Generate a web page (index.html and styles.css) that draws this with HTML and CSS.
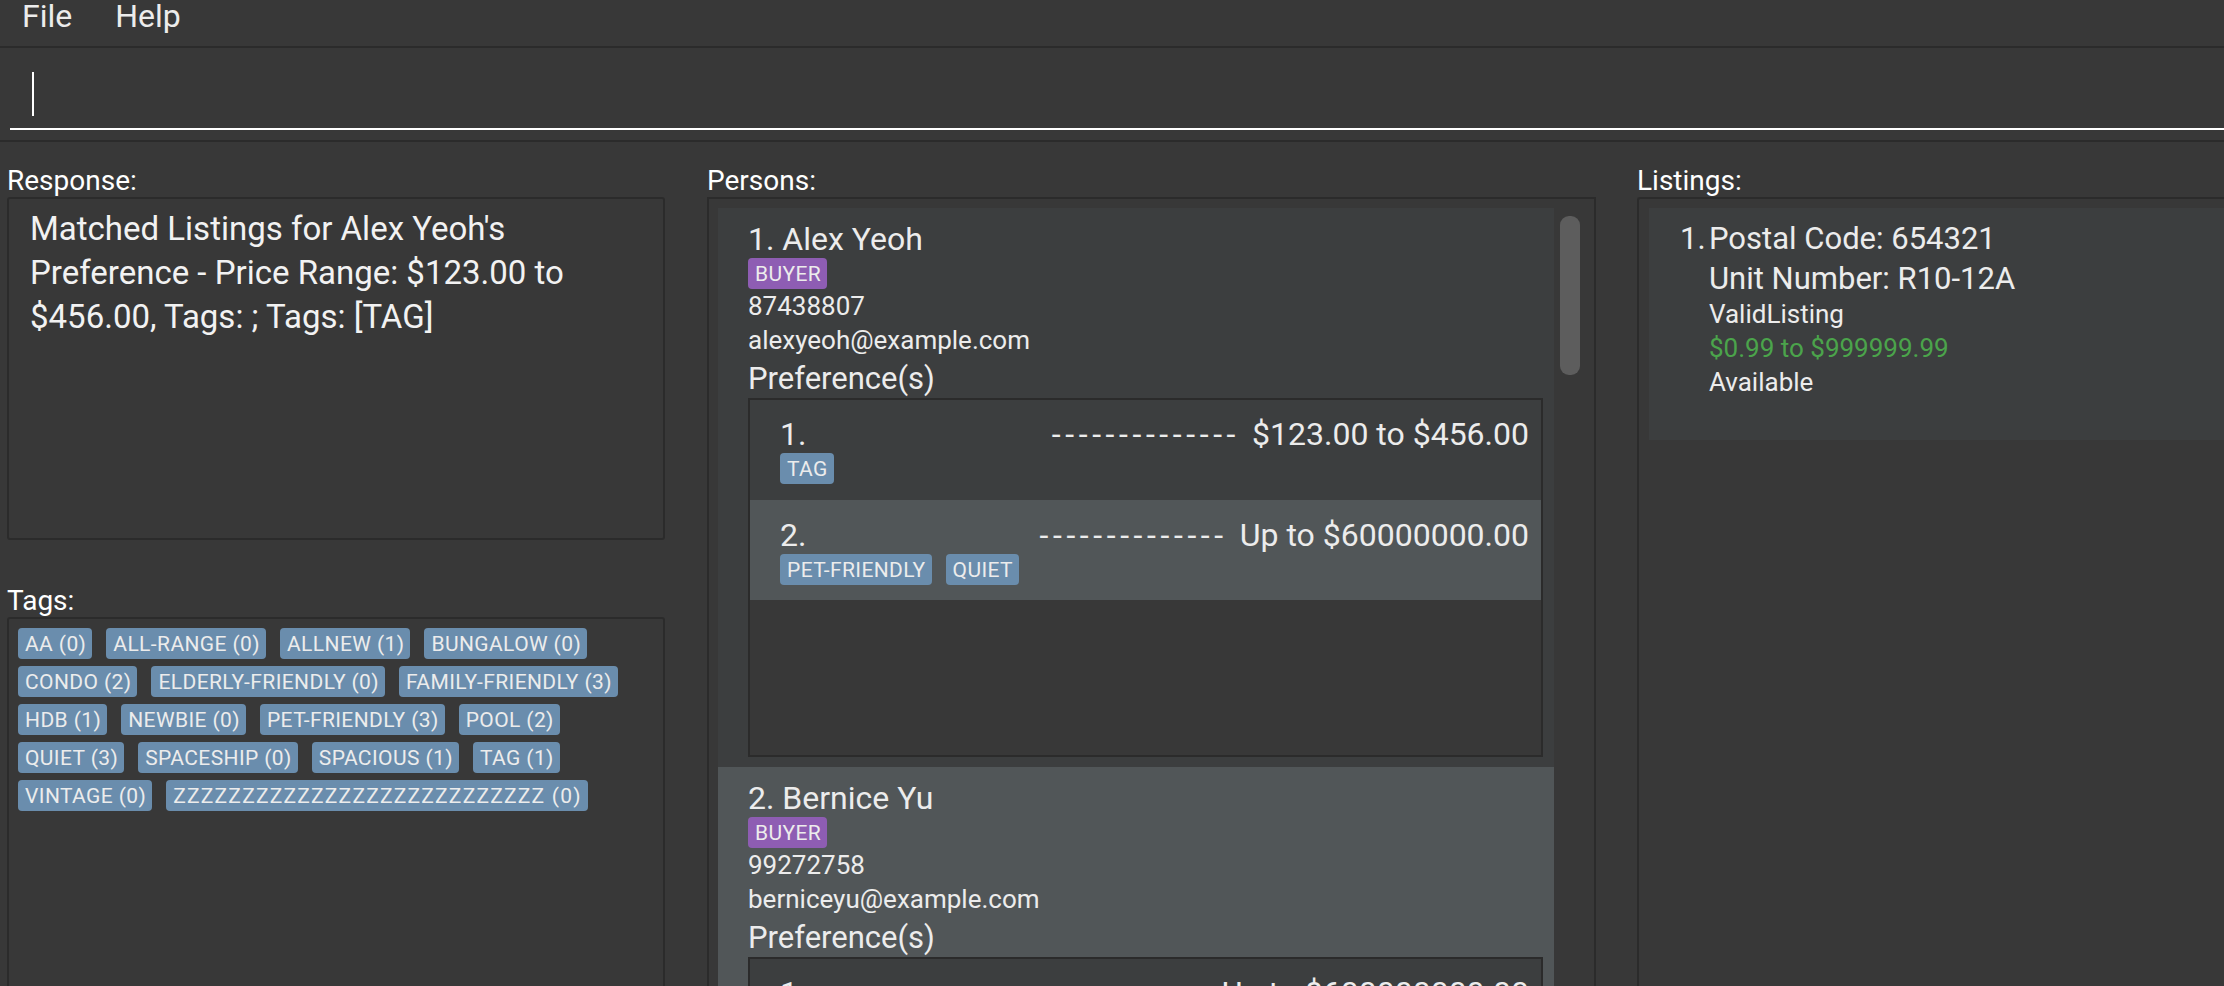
FILE: index.html
```html
<!DOCTYPE html>
<html>
<head>
<meta charset="utf-8">
<link rel="stylesheet" href="styles.css">
</head>
<body>
<div class="menubar">
  <span class="menu">File</span>
  <span class="menu">Help</span>
</div>
<div class="command">
  <div class="cmd-field"><span class="caret"></span></div>
</div>
<div class="main">
  <div class="col col-left">
    <div class="label">Response:</div>
    <div class="box response">Matched Listings for Alex Yeoh's Preference - Price Range: $123.00 to $456.00, Tags: ; Tags: [TAG]</div>
    <div class="label tags-label">Tags:</div>
    <div class="box tags">
      <span class="chip">AA (0)</span>
      <span class="chip">ALL-RANGE (0)</span>
      <span class="chip">ALLNEW (1)</span>
      <span class="chip">BUNGALOW (0)</span>
      <span class="chip">CONDO (2)</span>
      <span class="chip">ELDERLY-FRIENDLY (0)</span>
      <span class="chip">FAMILY-FRIENDLY (3)</span>
      <span class="chip">HDB (1)</span>
      <span class="chip">NEWBIE (0)</span>
      <span class="chip">PET-FRIENDLY (3)</span>
      <span class="chip">POOL (2)</span>
      <span class="chip">QUIET (3)</span>
      <span class="chip">SPACESHIP (0)</span>
      <span class="chip">SPACIOUS (1)</span>
      <span class="chip">TAG (1)</span>
      <span class="chip">VINTAGE (0)</span>
      <span class="chip zz">ZZZZZZZZZZZZZZZZZZZZZZZZZZZ (0)</span>
    </div>
  </div>
  <div class="col col-mid">
    <div class="label">Persons:</div>
    <div class="box persons">
      <div class="cards">
        <div class="card">
          <div class="name">1. Alex Yeoh</div>
          <span class="chip role">BUYER</span>
          <div class="small">87438807</div>
          <div class="small">alexyeoh@example.com</div>
          <div class="pref-title">Preference(s)</div>
          <div class="pref-list">
            <div class="pref">
              <div class="pref-head"><span class="idx">1.</span><span class="dash">--------------</span><span class="price">$123.00 to $456.00</span></div>
              <div class="pref-tags"><span class="chip">TAG</span></div>
            </div>
            <div class="pref odd">
              <div class="pref-head"><span class="idx">2.</span><span class="dash">--------------</span><span class="price">Up to $60000000.00</span></div>
              <div class="pref-tags"><span class="chip">PET-FRIENDLY</span><span class="chip">QUIET</span></div>
            </div>
          </div>
        </div>
        <div class="card odd">
          <div class="name">2. Bernice Yu</div>
          <span class="chip role">BUYER</span>
          <div class="small">99272758</div>
          <div class="small">berniceyu@example.com</div>
          <div class="pref-title">Preference(s)</div>
          <div class="pref-list">
            <div class="pref">
              <div class="pref-head"><span class="idx">1.</span><span class="dash">--------------</span><span class="price">Up to $600000000.00</span></div>
              <div class="pref-tags"><span class="chip">CONDO</span></div>
            </div>
          </div>
        </div>
      </div>
      <div class="scroll"><div class="thumb"></div></div>
    </div>
  </div>
  <div class="col col-right">
    <div class="label">Listings:</div>
    <div class="box listings">
      <div class="lcard">
        <div class="lidx">1.</div>
        <div class="lbody">
          <div class="lbig">Postal Code: 654321</div>
          <div class="lbig unit">Unit Number: R10-12A</div>
          <div class="lsmall">ValidListing</div>
          <div class="lsmall green">$0.99 to $999999.99</div>
          <div class="lsmall">Available</div>
        </div>
      </div>
    </div>
  </div>
</div>
</body>
</html>
```
FILE: styles.css
```css
html, body {
  margin: 0;
  padding: 0;
}
body {
  width: 2224px;
  height: 986px;
  overflow: hidden;
  background: #383838;
  color: #ececec;
  font-family: Roboto, "Liberation Sans", sans-serif;
}

.menubar {
  height: 46px;
  border-bottom: 2px solid #2b2b2b;
  display: flex;
  align-items: flex-start;
  padding-left: 22px;
  gap: 43px;
}
.menu {
  font-size: 32px;
  line-height: 32px;
  color: #ececec;
}

.command {
  height: 68px;
  padding: 24px 0 0 10px;
  border-bottom: 2px solid #2b2b2b;
}
.cmd-field {
  height: 56px;
  border-bottom: 2px solid #ffffff;
}
.caret {
  display: block;
  margin-left: 22px;
  width: 2px;
  height: 44px;
  background: #ffffff;
}

.main {
  display: flex;
  padding: 22px 0 0 7px;
  height: 900px;
  overflow: hidden;
}
.col {
  display: flex;
  flex-direction: column;
  flex: none;
}
.col-left { width: 658px; margin-right: 42px; }
.col-mid { width: 889px; margin-right: 41px; }
.col-right { width: 640px; }

.label {
  font-size: 28px;
  line-height: 33px;
  color: #ffffff;
}
.box {
  border: 2px solid #2b2b2b;
  border-radius: 3px;
  box-sizing: border-box;
}
.response {
  height: 343px;
  padding: 8px 16px 0 21px;
  font-size: 33px;
  line-height: 44px;
  color: #f2f2f2;
}
.tags-label { margin-top: 44px; }
.tags {
  flex: 1;
  padding: 9px;
  display: flex;
  flex-wrap: wrap;
  align-content: flex-start;
  gap: 7px 14px;
}
.chip {
  display: inline-block;
  background: #6a8dad;
  color: #ececec;
  border-radius: 4px;
  font-size: 21px;
  height: 31px;
  line-height: 30px;
  padding: 1px 6px 0 7px;
  box-sizing: border-box;
  white-space: nowrap;
  letter-spacing: 0.4px;
}
.chip.zz { letter-spacing: 1.2px; }
.chip.role { background: #8e5db3; }

.persons {
  flex: 1;
  display: flex;
  padding: 9px 0 0 9px;
  border-radius: 0;
}
.cards { width: 836px; flex: none; }
.scroll { width: 40px; flex: none; padding: 8px 0 0 6px; box-sizing: border-box; }
.thumb {
  width: 20px;
  height: 159px;
  border-radius: 9px;
  background: #5d5d5d;
}

.card {
  display: flex;
  flex-direction: column;
  align-items: flex-start;
  padding: 12px 11px 10px 30px;
  background: #3c3e3f;
}
.card.odd { background: #515658; }
.name { font-size: 32px; line-height: 38px; }
.small { font-size: 26px; line-height: 34px; }
.pref-title { font-size: 31px; line-height: 39px; padding-top: 2px; }
.pref-list {
  align-self: stretch;
  height: 359px;
  box-sizing: border-box;
  border: 2px solid #2b2b2b;
  background: #383838;
}
.pref {
  height: 100px;
  box-sizing: border-box;
  padding: 15px 12px 0 30px;
  background: #3c3e3f;
}
.pref.odd { background: #515658; padding-top: 16px; }
.pref-head {
  display: flex;
  font-size: 32px;
  line-height: 38px;
}
.idx { flex: 1; }
.dash { letter-spacing: 4.6px; margin-right: 12px; }
.pref-tags { display: flex; gap: 14px; }

.listings {
  flex: 1;
  padding: 9px 0 0 10px;
  border-right: none;
}
.lcard {
  display: flex;
  height: 232px;
  box-sizing: border-box;
  padding: 12px 0 0 31px;
  background: #3c3e3f;
}
.lidx { width: 29px; font-size: 31px; line-height: 38px; }
.lbig { font-size: 31px; line-height: 38px; }
.lbig.unit { padding-top: 2px; line-height: 37px; }
.lsmall { font-size: 26px; line-height: 34px; }
.green { color: #4ba44b; }
```
